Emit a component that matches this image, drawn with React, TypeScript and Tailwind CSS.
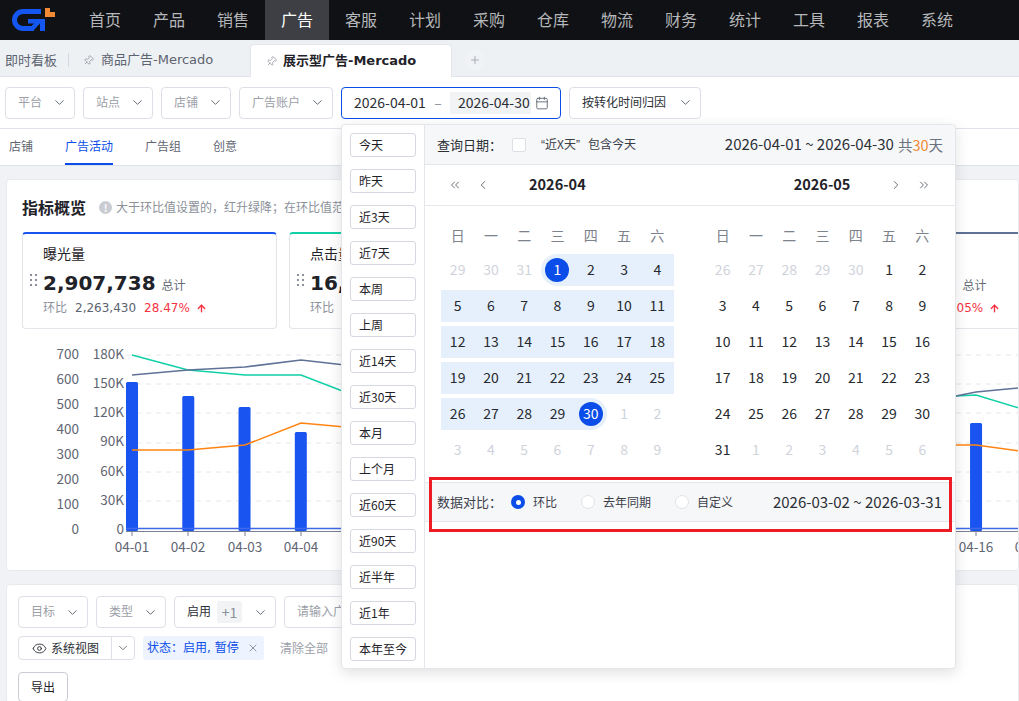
import { Calendar, ChevronDown, ChevronLeft, ChevronRight, ChevronsLeft, ChevronsRight, Eye, Pin, Plus, X, ArrowUp } from 'lucide-react';

const navItems = ['首页', '产品', '销售', '广告', '客服', '计划', '采购', '仓库', '物流', '财务', '统计', '工具', '报表', '系统'];
const presets = ['今天', '昨天', '近3天', '近7天', '本周', '上周', '近14天', '近30天', '本月', '上个月', '近60天', '近90天', '近半年', '近1年', '本年至今'];
const weekDays = ['日', '一', '二', '三', '四', '五', '六'];

const base = "font-['Noto_Sans_CJK_SC',sans-serif]";
const wide = "font-['DejaVu_Sans','Noto_Sans_CJK_SC',sans-serif]";
const quote = "font-['Liberation_Sans',sans-serif]";

function Logo() {
    return (
        <svg width="46" height="26" viewBox="0 0 46 26" className="ml-3 shrink-0">
            <path d="M29 4.5H11A8.5 8.5 0 0 0 11 21.5H22" fill="none" stroke="#1456f0" strokeWidth="5" />
            <path d="M16 12h17v12h-5v-7.5l-7 7.5h-7l8-7.5h-6z" fill="#1456f0" />
            <path d="M33 1h5v4h5v5H33z" fill="#f08a35" />
        </svg>
    );
}

function Select({ label, className, dark }: { label: string; className: string; dark?: boolean }) {
    return (
        <div className={`h-8 shrink-0 flex items-center justify-between pl-3 pr-[7px] border border-[#dcdfe6] rounded-[4px] bg-white text-xs ${dark ? 'text-[#2b2f36]' : 'text-[#9ca0a8]'} ${className}`}>
            <span className="whitespace-nowrap pb-[2px]">{label}</span>
            <ChevronDown size={15} strokeWidth={1.5} className="text-[#5c6370]" />
        </div>
    );
}

function Grip() {
    return (
        <svg width="7" height="13" viewBox="0 0 7 13" className="absolute left-[7px] top-[40px] text-[#8a8f99]" fill="currentColor">
            <rect x="0" y="0" width="2" height="2" />
            <rect x="5" y="0" width="2" height="2" />
            <rect x="0" y="5" width="2" height="2" />
            <rect x="5" y="5" width="2" height="2" />
            <rect x="0" y="10" width="2" height="2" />
            <rect x="5" y="10" width="2" height="2" />
        </svg>
    );
}

function MetricCard({ title, value, prev, rate, top }: { title: string; value: string; prev: string; rate: string; top: string }) {
    return (
        <div className={`relative w-[255px] h-[97px] shrink-0 rounded-[4px] border border-[#e3e5ea] border-t-2 ${top} bg-white pl-[20px]`}>
            <Grip />
            <div className="mt-[9px] text-sm leading-[20px] text-[#1f2329]">{title}</div>
            <div className="flex items-baseline mt-[6px] leading-[28px]">
                <span className={`${wide} text-[20px] font-bold text-[#1f2329]`}>{value}</span>
                <span className="ml-[6px] text-xs text-[#666b75]">总计</span>
            </div>
            <div className={`flex items-center text-xs leading-[20px] mt-px ${wide}`}>
                <span className="text-[#8b9099]">环比</span>
                <span className="ml-2 text-[#5c6370]">{prev}</span>
                <span className="ml-2 text-[#f5333f]">{rate}</span>
                <ArrowUp size={11} strokeWidth={3} className="ml-[6px] text-[#f5333f]" />
            </div>
        </div>
    );
}

function Chart() {
    const step = 56.27;
    const bars: [number, number][] = [[0, 382], [1, 396], [2, 407], [3, 432], [15, 423]];
    const left = ['700', '600', '500', '400', '300', '200', '100', '0'];
    const right = ['180K', '150K', '120K', '90K', '60K', '30K', '0'];
    const labels = ['04-01', '04-02', '04-03', '04-04', '04-16', '04-17'];
    const labelX = [132, 188, 245, 301, 976, 1032];
    return (
        <svg width="1012" height="215" viewBox="7 340 1012 215" className={`block mt-[11px] ${base}`}>
            {[355, 384, 413, 443, 472, 501].map((y) => (
                <line key={y} x1="126" x2="1019" y1={y} y2={y} stroke="#e6e6e6" strokeDasharray="5 5" />
            ))}
            {left.map((t, i) => (
                <text key={t} x="79" y={358.5 + i * 25.1} textAnchor="end" fontSize="13.5" fill="#5f6672">{t}</text>
            ))}
            {right.map((t, i) => (
                <text key={t} x="124" y={358.5 + i * 29.3} textAnchor="end" fontSize="13.5" fill="#5f6672">{t}</text>
            ))}
            {bars.map(([i, y]) => (
                <rect key={i} x={126 + i * step} y={y} width="12" height={531 - y} rx="1.5" fill="#1a54f0" />
            ))}
            <line x1="126" x2="1019" y1="528.5" y2="528.5" stroke="#3f69e8" strokeWidth="1.5" />
            <line x1="126" x2="1019" y1="531.5" y2="531.5" stroke="#7a8194" />
            {labelX.map((x) => (
                <line key={x} x1={x} x2={x} y1="531" y2="536" stroke="#7a8194" />
            ))}
            <polyline points="132,355 188,370 245,375 301,375 345,392" fill="none" stroke="#0fd0a6" strokeWidth="1.5" />
            <polyline points="132,375 188,370 245,367 301,360 345,365" fill="none" stroke="#5f7196" strokeWidth="1.5" />
            <polyline points="132,450 188,450 245,445 301,423 345,427" fill="none" stroke="#ff8412" strokeWidth="1.5" />
            <polyline points="956,396 976,395 1019,408" fill="none" stroke="#0fd0a6" strokeWidth="1.5" />
            <polyline points="956,396 976,392 1019,388" fill="none" stroke="#5f7196" strokeWidth="1.5" />
            <polyline points="956,445 976,445 1019,451" fill="none" stroke="#ff8412" strokeWidth="1.5" />
            {labels.map((t, i) => (
                <text key={t} x={labelX[i]} y="552" textAnchor="middle" fontSize="13.5" fill="#5f6672">{t}</text>
            ))}
        </svg>
    );
}

function DayCell({ day, muted, inRange, edge }: { day: number; muted?: boolean; inRange?: boolean; edge?: 'start' | 'end' }) {
    let band = '';
    if (inRange) band = 'bg-[#e6f0fc]';
    if (edge === 'start') band = 'bg-[#e6f0fc] rounded-l-full';
    if (edge === 'end') band = 'bg-[#e6f0fc] rounded-r-full';
    return (
        <div className={`h-8 flex items-center justify-center text-sm ${edge ? '' : 'pb-[2px]'} ${band} ${muted ? 'text-[#d0d3da]' : 'text-[#262a30]'}`}>
            {edge ? (
                <span className="w-6 h-6 rounded-full bg-[#0a4de8] text-white flex items-center justify-center pb-[2px]">{day}</span>
            ) : (
                day
            )}
        </div>
    );
}

function Month({ cells, className }: { cells: { day: number; muted?: boolean; inRange?: boolean; edge?: 'start' | 'end' }[]; className: string }) {
    return (
        <div className={`w-[233px] ${className}`}>
            <div className="grid grid-cols-7 h-[32px] items-center text-center text-sm text-[#7d828c] mb-[2px] pb-[2px]">
                {weekDays.map((d) => (
                    <span key={d}>{d}</span>
                ))}
            </div>
            <div className="grid grid-cols-7 gap-y-1">
                {cells.map((c, i) => (
                    <DayCell key={i} {...c} />
                ))}
            </div>
        </div>
    );
}

const range = (from: number, to: number, muted?: boolean, inRange?: boolean) => {
    const out: { day: number; muted?: boolean; inRange?: boolean }[] = [];
    for (let d = from; d <= to; d++) out.push({ day: d, muted, inRange });
    return out;
};

const aprilCells = [
    ...range(29, 31, true),
    { day: 1, edge: 'start' as const },
    ...range(2, 29, false, true),
    { day: 30, edge: 'end' as const },
    ...range(1, 9, true),
];

const mayCells = [...range(26, 30, true), ...range(1, 31), ...range(1, 6, true)];

function DatePopup() {
    return (
        <div className="absolute left-[341px] top-[124px] w-[615px] h-[545px] z-20 bg-white border border-[#e4e6eb] rounded-[4px] shadow-[0_4px_14px_rgba(0,0,0,0.12)] flex">
            <div className="w-[83px] shrink-0 border-r border-[#e4e6eb] pt-2 pl-2 flex flex-col gap-3">
                {presets.map((p) => (
                    <div key={p} className="w-[66px] h-6 shrink-0 border border-[#d5d8df] rounded-[3px] pl-2 flex items-center text-xs text-[#1f2329] whitespace-nowrap">
                        {p}
                    </div>
                ))}
            </div>
            <div className="flex-1 min-w-0 flex flex-col">
                <div className="h-[40px] shrink-0 bg-[#f6f7f9] border-b border-[#e4e6eb] flex items-center pl-3 pr-3 rounded-tr-[4px]">
                    <span className="text-[13px] text-[#2b2f36]">查询日期：</span>
                    <span className="ml-[10px] w-[14px] h-[14px] bg-white border border-[#dcdfe6] rounded-[2px]" />
                    <span className="ml-[15px] text-xs text-[#3c4049] whitespace-nowrap">
                        <span className={quote}>“</span>近X天<span className={quote}>”</span>
                        <span className="ml-2">包含今天</span>
                    </span>
                    <span className="ml-auto text-[15px] text-[#2b2f36]">2026-04-01 ~ 2026-04-30</span>
                    <span className="ml-1 text-[14.5px] text-[#6b7280]">共<span className="text-[#f08a35]">30</span>天</span>
                </div>
                <div className="h-[41px] shrink-0 border-b border-[#e6e8ec] flex items-center text-[#555b66]">
                    <ChevronsLeft size={14} strokeWidth={1.5} className="ml-[23px]" />
                    <ChevronLeft size={14} strokeWidth={1.5} className="ml-[14px]" />
                    <span className="ml-[39px] mb-[2px] text-[14.5px] font-bold text-[#1f2329]">2026-04</span>
                    <span className="ml-[208px] mb-[2px] text-[14.5px] font-bold text-[#1f2329]">2026-05</span>
                    <ChevronRight size={14} strokeWidth={1.5} className="ml-[39px]" />
                    <ChevronsRight size={14} strokeWidth={1.5} className="ml-[14px]" />
                </div>
                <div className="flex mt-[14px]">
                    <Month cells={aprilCells} className="ml-4" />
                    <Month cells={mayCells} className="ml-[32px]" />
                </div>
                <div className="mt-auto mb-[146px] h-[40px] bg-[#f6f7f9] border-y border-[#e4e6eb] flex items-center pl-3 pr-[13px] text-xs text-[#3c4049]">
                    <span className="text-[13px]">数据对比：</span>
                    <span className="ml-[9px] w-[14px] h-[14px] rounded-full bg-[#0a4de8] flex items-center justify-center">
                        <span className="w-[5px] h-[5px] rounded-full bg-white" />
                    </span>
                    <span className="ml-2">环比</span>
                    <span className="ml-[24px] w-[14px] h-[14px] rounded-full bg-white border border-[#e0e2e7]" />
                    <span className="ml-2">去年同期</span>
                    <span className="ml-[24px] w-[14px] h-[14px] rounded-full bg-white border border-[#e0e2e7]" />
                    <span className="ml-2">自定义</span>
                    <span className="ml-auto text-[15px] text-[#2b2f36]">2026-03-02 ~ 2026-03-31</span>
                </div>
            </div>
            <div className="absolute left-[87px] top-[352px] w-[523px] h-[55px] border-[3px] border-[#ed1c24] pointer-events-none" />
        </div>
    );
}

export default function App() {
    return (
        <div className={`relative w-full h-screen overflow-hidden bg-[#f0f2f5] ${base}`}>
            <header className="h-10 bg-[#101114] flex items-center">
                <Logo />
                <nav className="flex ml-[15px] h-full">
                    {navItems.map((n) => (
                        <div key={n} className={`w-16 h-full pb-[2px] flex items-center justify-center text-base ${n === '广告' ? 'bg-[#3e3f44] text-white' : 'text-[#b5b7ba]'}`}>
                            {n}
                        </div>
                    ))}
                </nav>
            </header>

            <div className="h-[37px] bg-[#eef1f4] border-b border-[#dfe2e8] flex items-end text-[13px]">
                <div className="h-[36px] w-[70px] pl-[5px] pt-1 flex items-center text-[#5c6370] shrink-0 whitespace-nowrap">
                    <span className="leading-[14px] pr-[11px] border-r border-[#d5d8df]">即时看板</span>
                </div>
                <div className={`h-[36px] w-[180px] shrink-0 pt-1 flex items-center pl-[13px] text-[#5c6370] whitespace-nowrap ${wide}`}>
                    <Pin size={11} strokeWidth={1.5} className="rotate-45 mr-[7px] text-[#8a8f99]" />
                    商品广告-Mercado
                </div>
                <div className={`relative top-px h-[33px] w-[202px] shrink-0 flex items-center pl-[15px] bg-white border border-b-0 border-[#e4e6eb] rounded-t-[4px] font-bold text-[#1f2329] whitespace-nowrap ${wide}`}>
                    <Pin size={11} strokeWidth={1.5} className="rotate-45 mr-[6px] text-[#8a8f99]" />
                    展示型广告-Mercado
                </div>
                <div className="ml-[13px] mb-[6px] w-5 h-5 rounded-full bg-[#f0f2f5] flex items-center justify-center">
                    <Plus size={12} strokeWidth={2} className="text-[#a9adb5]" />
                </div>
            </div>

            <div className="h-[52px] bg-white border-b border-[#dfe2e8] flex items-center pl-[5px] gap-2">
                <Select label="平台" className="w-[70px]" />
                <Select label="站点" className="w-[70px]" />
                <Select label="店铺" className="w-[70px]" />
                <Select label="广告账户" className="w-[94px]" />
                <div className="w-[220px] h-8 shrink-0 flex items-center border border-[#0a4de8] rounded-[4px] pl-3 text-sm text-[#2b2f36] whitespace-nowrap">
                    <span className="pb-[2px]">2026-04-01</span>
                    <span className="w-6 pb-[2px] text-center text-[#8a8f99]">–</span>
                    <span className="bg-[#f2f3f5] w-[81px] h-[22px] pl-2 pb-[2px] flex items-center">2026-04-30</span>
                    <Calendar size={14} strokeWidth={1.5} className="ml-1 text-[#5c6370]" />
                </div>
                <Select label="按转化时间归因" className="w-[132px]" dark />
            </div>

            <div className="h-[37px] bg-white border-b border-[#dfe2e8] flex items-stretch pl-[9px] text-xs text-[#5f6672]">
                <span className="flex items-center pb-[2px]">店铺</span>
                <span className="ml-[32px] flex items-center border-b-2 border-[#0a4de8] text-[#0a4de8]">广告活动</span>
                <span className="ml-[32px] flex items-center pb-[2px]">广告组</span>
                <span className="ml-[32px] flex items-center pb-[2px]">创意</span>
            </div>

            <section className="mt-[13px] ml-[6px] h-[392px] bg-white border border-[#e8eaee] rounded-[4px] overflow-hidden">
                <div className="ml-[15px] mt-[17px] h-[20px] flex items-center">
                    <h2 className="text-base font-bold text-[#1f2329]">指标概览</h2>
                    <span className="ml-[13px] w-[13px] h-[13px] rounded-full bg-[#c9ccd2] text-white text-[10px] font-bold flex items-center justify-center">!</span>
                    <span className="ml-[4px] text-xs text-[#8b9099] whitespace-nowrap">大于环比值设置的，红升绿降；在环比值范围内</span>
                </div>
                <div className="ml-[15px] mt-[15px] flex gap-3">
                    <MetricCard title="曝光量" value="2,907,738" prev="2,263,430" rate="28.47%" top="border-t-[#1a54f0]" />
                    <MetricCard title="点击量" value="16,382" prev="14,208" rate="15.30%" top="border-t-[#0fd0a6]" />
                    <MetricCard title="花费" value="6,240" prev="5,916" rate="5.48%" top="border-t-[#ff8412]" />
                    <MetricCard title="销售额" value="1,024,856" prev="1,263,430" rate="8.05%" top="border-t-[#5f7196]" />
                </div>
                <Chart />
            </section>

            <section className="mt-[13px] ml-[6px] h-[120px] bg-white border border-[#e8eaee] rounded-[4px] pl-[11px] pt-[11px]">
                <div className="flex gap-2 items-center">
                    <Select label="目标" className="w-[70px]" />
                    <Select label="类型" className="w-[70px]" />
                    <div className="w-[102px] h-8 shrink-0 flex items-center border border-[#dcdfe6] rounded-[4px] pl-3 pr-[7px] text-xs text-[#2b2f36]">
                        <span className="pb-[2px]">启用</span>
                        <span className="ml-[6px] w-[25px] h-[22px] rounded-[3px] bg-[#f2f3f5] text-sm text-[#8a8f99] flex items-center justify-center">+1</span>
                        <ChevronDown size={15} strokeWidth={1.5} className="ml-auto text-[#5c6370]" />
                    </div>
                    <div className="w-[200px] h-8 shrink-0 flex items-center border border-[#dcdfe6] rounded-[4px] pl-3 pb-[2px] text-xs text-[#9ca0a8]">请输入广告活动名称</div>
                </div>
                <div className="flex items-center mt-2 h-6">
                    <div className="w-[117px] h-6 shrink-0 flex items-center border border-[#dcdfe6] rounded-[4px] text-xs text-[#2b2f36]">
                        <Eye size={15} strokeWidth={1.5} className="ml-[13px] mr-1" />
                        <span>系统视图</span>
                        <span className="ml-3 h-full border-l border-[#dcdfe6] flex-1 flex items-center justify-center">
                            <ChevronDown size={14} strokeWidth={1.5} className="text-[#5c6370]" />
                        </span>
                    </div>
                    <div className={`ml-2 w-[121px] h-6 shrink-0 flex items-center rounded-[3px] bg-[#edf4ff] pl-1 text-xs text-[#0a4de8] whitespace-nowrap ${wide}`}>
                        <span>状态：启用, 暂停</span>
                        <X size={12} strokeWidth={1.5} className="ml-2 text-[#6b7280]" />
                    </div>
                    <span className="ml-4 text-xs text-[#9ca0a8]">清除全部</span>
                </div>
                <div className="mt-3 w-[50px] h-[30px] flex items-center justify-center border border-[#c9ccd2] rounded-[4px] text-xs text-[#1f2329]">导出</div>
            </section>

            <DatePopup />
        </div>
    );
}
